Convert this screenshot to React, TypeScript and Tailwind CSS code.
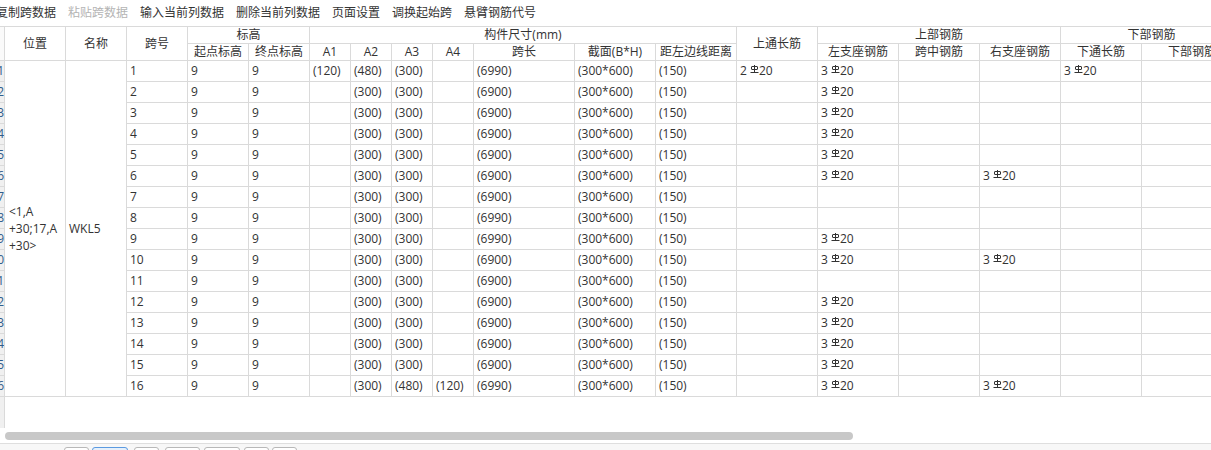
import React from "react";

interface SpanRow { n: number; a1: string; a2: string; a3: string; a4: string; len: string; top: string; left: string; right: string; bot: string; }

const R = "3#20";
const rows: SpanRow[] = [
  { n: 1, a1: "(120)", a2: "(480)", a3: "(300)", a4: "", len: "(6990)", top: "2#20", left: R, right: "", bot: R },
  { n: 2, a1: "", a2: "(300)", a3: "(300)", a4: "", len: "(6900)", top: "", left: R, right: "", bot: "" },
  { n: 3, a1: "", a2: "(300)", a3: "(300)", a4: "", len: "(6900)", top: "", left: R, right: "", bot: "" },
  { n: 4, a1: "", a2: "(300)", a3: "(300)", a4: "", len: "(6900)", top: "", left: R, right: "", bot: "" },
  { n: 5, a1: "", a2: "(300)", a3: "(300)", a4: "", len: "(6900)", top: "", left: R, right: "", bot: "" },
  { n: 6, a1: "", a2: "(300)", a3: "(300)", a4: "", len: "(6900)", top: "", left: R, right: R, bot: "" },
  { n: 7, a1: "", a2: "(300)", a3: "(300)", a4: "", len: "(6900)", top: "", left: "", right: "", bot: "" },
  { n: 8, a1: "", a2: "(300)", a3: "(300)", a4: "", len: "(6990)", top: "", left: "", right: "", bot: "" },
  { n: 9, a1: "", a2: "(300)", a3: "(300)", a4: "", len: "(6990)", top: "", left: R, right: "", bot: "" },
  { n: 10, a1: "", a2: "(300)", a3: "(300)", a4: "", len: "(6900)", top: "", left: R, right: R, bot: "" },
  { n: 11, a1: "", a2: "(300)", a3: "(300)", a4: "", len: "(6900)", top: "", left: "", right: "", bot: "" },
  { n: 12, a1: "", a2: "(300)", a3: "(300)", a4: "", len: "(6900)", top: "", left: R, right: "", bot: "" },
  { n: 13, a1: "", a2: "(300)", a3: "(300)", a4: "", len: "(6900)", top: "", left: R, right: "", bot: "" },
  { n: 14, a1: "", a2: "(300)", a3: "(300)", a4: "", len: "(6900)", top: "", left: R, right: "", bot: "" },
  { n: 15, a1: "", a2: "(300)", a3: "(300)", a4: "", len: "(6900)", top: "", left: R, right: "", bot: "" },
  { n: 16, a1: "", a2: "(300)", a3: "(480)", a4: "(120)", len: "(6990)", top: "", left: R, right: R, bot: "" },
];

// grade III rebar mark
const Bar = () => (
  <svg width="9" height="8" viewBox="0 0 9 8" className="ml-[3px] -mt-[5px] shrink-0" fill="none" stroke="#333" strokeWidth="1">
    <path d="M4.5 0v7" />
    <rect x="1.5" y="1.5" width="6" height="3" rx="0.5" />
    <path d="M0.5 7.5h8" />
  </svg>
);

const Rebar = ({ v }: { v: string }) => {
  if (!v) return null;
  const [a, b] = v.split("#");
  return <span className="flex items-center">{a}<Bar />{b}</span>;
};

const cell = "border-r border-b border-[#dadada] flex items-center overflow-hidden whitespace-nowrap";
const head = cell + " justify-center";
const td = cell + " pl-[3px]";
const toolbar = ["复制跨数据", "粘贴跨数据", "输入当前列数据", "删除当前列数据", "页面设置", "调换起始跨", "悬臂钢筋代号"];

export default function App() {
  return (
    <div className="w-[1211px] h-[450px] overflow-hidden bg-white text-[12px] text-[#333] font-['Open_Sans','Noto_Sans_CJK_SC',sans-serif]">
      <div className="flex items-center h-[26px] gap-3 ml-[-4px]">
        {toolbar.map((t, i) => (
          <span key={t} className={i === 1 ? "text-[#b4b4b4]" : ""}>{t}</span>
        ))}
      </div>

      <div className="grid w-[1243px] border-t border-[#dadada] grid-cols-[5px_61px_61px_61px_61px_61px_41px_41px_41px_41px_101px_81px_81px_81px_81px_81px_81px_81px_101px] grid-rows-[17px_17px_repeat(16,21px)]">
        <div className={cell + " row-span-2 bg-[#fafafa]"} />
        <div className={head + " row-span-2"}>位置</div>
        <div className={head + " row-span-2"}>名称</div>
        <div className={head + " row-span-2"}>跨号</div>
        <div className={head + " col-span-2"}>标高</div>
        <div className={head + " col-span-7"}>构件尺寸(mm)</div>
        <div className={head + " row-span-2"}>上通长筋</div>
        <div className={head + " col-span-3"}>上部钢筋</div>
        <div className={head + " col-span-2"}>下部钢筋</div>
        {["起点标高", "终点标高", "A1", "A2", "A3", "A4", "跨长", "截面(B*H)", "距左边线距离", "左支座钢筋", "跨中钢筋", "右支座钢筋", "下通长筋", "下部钢筋"].map(h => (
          <div key={h} className={head}>{h}</div>
        ))}

        {rows.map((r, i) => (
          <React.Fragment key={r.n}>
            <div className={cell + " justify-end bg-[#f0f0f0] text-[#2f5d8c]"}>{r.n}</div>
            {i === 0 && (
              <>
                <div className={cell + " row-span-16 pl-[4px] whitespace-normal leading-[17px]"}>
                  <span>&lt;1,A<br />+30;17,A<br />+30&gt;</span>
                </div>
                <div className={cell + " row-span-16 pl-[3px]"}>WKL5</div>
              </>
            )}
            <div className={td}>{r.n}</div>
            <div className={td}>9</div>
            <div className={td}>9</div>
            <div className={td}>{r.a1}</div>
            <div className={td}>{r.a2}</div>
            <div className={td}>{r.a3}</div>
            <div className={td}>{r.a4}</div>
            <div className={td}>{r.len}</div>
            <div className={td}>(300*600)</div>
            <div className={td}>(150)</div>
            <div className={td}><Rebar v={r.top} /></div>
            <div className={td}><Rebar v={r.left} /></div>
            <div className={td} />
            <div className={td}><Rebar v={r.right} /></div>
            <div className={td}><Rebar v={r.bot} /></div>
            <div className={td} />
          </React.Fragment>
        ))}
      </div>

      <div className="h-[31px] flex">
        <div className="w-[5px] bg-[#f0f0f0] border-r border-[#dadada]" />
      </div>
      <div className="h-[15px] pt-[4px]">
        <div className="ml-[5px] w-[848px] h-[8px] rounded-full bg-[#c8c8c8]" />
      </div>
      <div className="h-[7px] border-t border-[#dedede] bg-[#f7f7f7] pt-[3px] flex">
        <div className="ml-[64px] flex gap-[3px]">
          <div className="w-[25px] h-[20px] rounded-[3px] border border-[#b8b8b8] bg-white" />
          <div className="w-[36px] h-[20px] rounded-[3px] border border-[#5b9ae0] bg-[#e6f0fb] mr-[3px]" />
          <div className="w-[25px] h-[20px] rounded-[3px] border border-[#b8b8b8] bg-white mr-[3px]" />
          <div className="w-[35px] h-[20px] rounded-[3px] border border-[#b8b8b8] bg-white mr-[1px]" />
          <div className="w-[36px] h-[20px] rounded-[3px] border border-[#b8b8b8] bg-white mr-[1px]" />
          <div className="w-[25px] h-[20px] rounded-[3px] border border-[#b8b8b8] bg-white" />
          <div className="w-[25px] h-[20px] rounded-[3px] border border-[#b8b8b8] bg-white" />
        </div>
      </div>
    </div>
  );
}
